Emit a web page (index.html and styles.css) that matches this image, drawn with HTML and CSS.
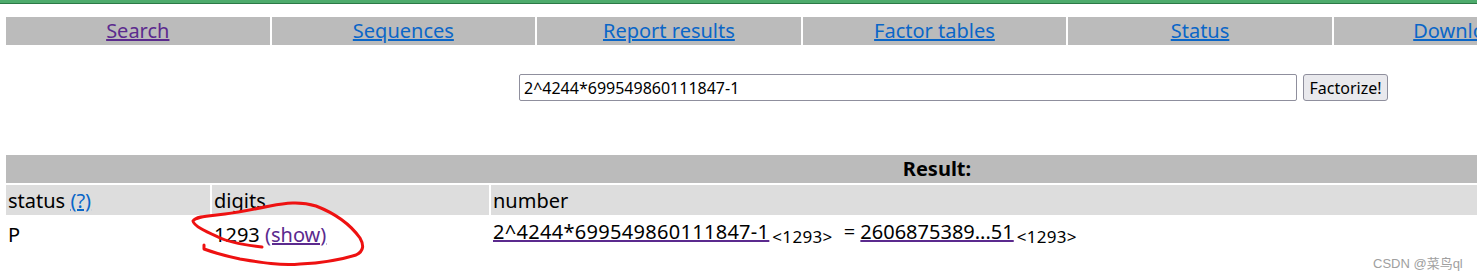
FILE: index.html
```html
<!DOCTYPE html>
<html>
<head>
    <title>factordb.com</title>
    <link rel="stylesheet" href="styles.css">
</head>
<body>
    <div class="topbar"></div>
    <div class="page">
        <table class="nav">
            <tr>
                <td><a href="#" class="visited">Search</a></td>
                <td><a href="#">Sequences</a></td>
                <td><a href="#">Report results</a></td>
                <td><a href="#">Factor tables</a></td>
                <td><a href="#">Status</a></td>
                <td><a href="#">Downloads</a></td>
                <td><a href="#">Login</a></td>
            </tr>
        </table>

        <form class="search">
            <input type="text" class="query" value="2^4244*699549860111847-1">
            <button type="button" class="go">Factorize!</button>
        </form>

        <table class="result">
            <colgroup>
                <col class="c-status">
                <col class="c-digits">
                <col>
            </colgroup>
            <tr class="title"><td colspan="3">Result:</td></tr>
            <tr class="head">
                <td>status <a href="#">(?)</a></td>
                <td>digits</td>
                <td>number</td>
            </tr>
            <tr class="row">
                <td>P</td>
                <td>1293 <a href="#" class="visited">(show)</a></td>
                <td>
                    <a href="#" class="num wide"><span>2^4244*699549860111847-1</span></a><sub>&lt;1293&gt;</sub>
                    <span class="eq">=</span>
                    <a href="#" class="num"><span>2606875389...51</span></a><sub>&lt;1293&gt;</sub>
                </td>
            </tr>
        </table>
    </div>

    <!-- hand drawn marker around the digits cell -->
    <svg class="scribble" width="400" height="279" viewBox="0 0 400 279">
        <path d="M262 247 C245 245 228 242 218 237 C205 231 194 226 193 221 C196 216 210 216 225 214 C240 212 255 209 270 206 C285 203 300 201 316 206 C334 213 350 224 360 238 C364 245 364 251 356 255 C340 260 320 263 300 264 C280 266 258 262 240 259 C225 256 212 252 204 249 L204 245"
              fill="none" stroke="#ee1111" stroke-width="3" stroke-linecap="round" stroke-linejoin="round"/>
    </svg>

    <div class="watermark">CSDN @菜鸟ql</div>
</body>
</html>
```

FILE: styles.css
```css
body {
    margin: 0;
    font-family: "Noto Sans", "Noto Sans CJK SC", sans-serif;
    font-size: 20px;
    color: #000;
    background: #fff;
    width: 1880px;
    min-height: 279px;
    position: relative;
}
a {
    color: #0a66c8;
}
a.visited {
    color: #5b2a8e;
}
.topbar {
    height: 3px;
    background: #4eab6c;
    border-bottom: 1px solid #2c7a46;
}
.page {
    padding: 0 4px;
}
.nav {
    width: 1861px;
    table-layout: fixed;
    border-spacing: 2px;
    margin-top: 11px;
}
.nav td {
    background: #bbbbbb;
    height: 28px;
    padding: 0;
    text-align: center;
    line-height: 28px;
}
.search {
    margin: 27px 0 0 0;
    padding-left: 515px;
    display: flex;
    gap: 6px;
    height: 27px;
}
.query {
    width: 778px;
    height: 27px;
    box-sizing: border-box;
    border: 1px solid #8f8f9d;
    border-radius: 2px;
    font-family: "Noto Sans", sans-serif;
    font-size: 16px;
    padding: 0 4px;
    color: #000;
}
.go {
    width: 85px;
    height: 27px;
    box-sizing: border-box;
    border: 1px solid #8f8f9d;
    border-radius: 3px;
    background: #e9e9ed;
    font-family: "Noto Sans", sans-serif;
    font-size: 16px;
    padding: 0;
    color: #000;
}
.result {
    width: 1866px;
    table-layout: fixed;
    border-spacing: 2px;
    margin-top: 52px;
}
.result td {
    padding: 0 2px;
    height: 28px;
    line-height: 28px;
    white-space: nowrap;
}
.c-status { width: 204px; }
.c-digits { width: 277px; }
.title td {
    background: #bbbbbb;
    text-align: center;
    font-weight: bold;
}
.head td {
    background: #dddddd;
    padding-top: 2px;
    height: 26px;
}
.row td {
    height: 30px;
    line-height: 30px;
}
.num {
    color: #5b2a8e;
}
.num span {
    color: #000;
}
.wide span {
    letter-spacing: 0.3px;
}
sub {
    font-size: 17px;
    letter-spacing: 0.3px;
    vertical-align: -4px;
    margin-left: 3px;
}
.eq {
    margin: 0 0 0 6px;
}
.scribble {
    position: absolute;
    top: 0;
    left: 0;
    pointer-events: none;
}
.watermark {
    position: absolute;
    top: 253px;
    left: 1373px;
    font-family: "Liberation Sans", "Noto Sans CJK SC", sans-serif;
    font-size: 13px;
    color: #a0a0a0;
}
```
